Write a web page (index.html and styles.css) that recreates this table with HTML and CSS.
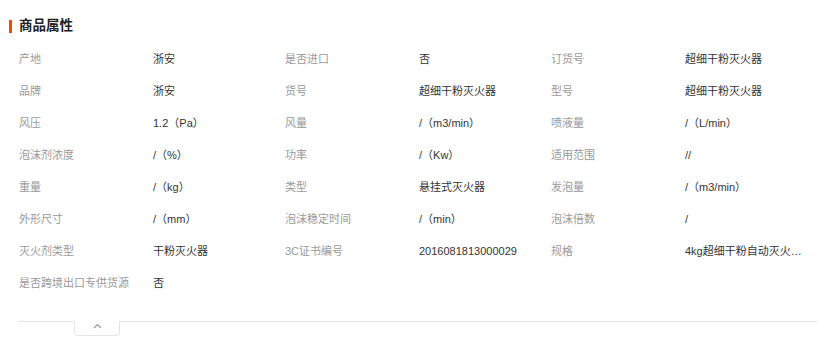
FILE: index.html
```html
<!DOCTYPE html>
<html lang="zh-CN">
<head>
<meta charset="utf-8">
<title>商品属性</title>
<link rel="stylesheet" href="styles.css">
</head>
<body>
<div class="panel">
  <h2 class="title">商品属性</h2>
  <div class="grid">
    <div class="k">产地</div><div class="v">浙安</div>
    <div class="k">是否进口</div><div class="v">否</div>
    <div class="k">订货号</div><div class="v">超细干粉灭火器</div>

    <div class="k">品牌</div><div class="v">浙安</div>
    <div class="k">货号</div><div class="v">超细干粉灭火器</div>
    <div class="k">型号</div><div class="v">超细干粉灭火器</div>

    <div class="k">风压</div><div class="v">1.2（Pa）</div>
    <div class="k">风量</div><div class="v">/（m3/min）</div>
    <div class="k">喷液量</div><div class="v">/（L/min）</div>

    <div class="k">泡沫剂浓度</div><div class="v">/（%）</div>
    <div class="k">功率</div><div class="v">/（Kw）</div>
    <div class="k">适用范围</div><div class="v">//</div>

    <div class="k">重量</div><div class="v">/（kg）</div>
    <div class="k">类型</div><div class="v">悬挂式灭火器</div>
    <div class="k">发泡量</div><div class="v">/（m3/min）</div>

    <div class="k">外形尺寸</div><div class="v">/（mm）</div>
    <div class="k">泡沫稳定时间</div><div class="v">/（min）</div>
    <div class="k">泡沫倍数</div><div class="v">/</div>

    <div class="k">灭火剂类型</div><div class="v">干粉灭火器</div>
    <div class="k">3C证书编号</div><div class="v">2016081813000029</div>
    <div class="k">规格</div><div class="v" title="4kg超细干粉自动灭火装置悬挂式">4kg超细干粉自动灭火装置悬挂式</div>

    <div class="k">是否跨境出口专供货源</div><div class="v">否</div>
  </div>
  <div class="divider">
    <button class="toggle" type="button" aria-label="收起">
      <svg width="9" height="6" viewBox="0 0 9 6"><path d="M1 5 L4.5 1.5 L8 5" fill="none" stroke="#999" stroke-width="1.2"/></svg>
    </button>
  </div>
</div>
</body>
</html>
```

FILE: styles.css
```css
* { box-sizing: border-box; }
html, body { margin: 0; padding: 0; background: #fff; }
body {
  font-family: "Liberation Sans", "Noto Sans CJK SC", sans-serif;
  font-size: 11px;
  color: #333;
}
.panel {
  width: 837px;
  padding: 16px 20px 0 9px;
}
.title {
  margin: 0;
  font-size: 13.5px;
  font-weight: bold;
  color: #222;
  line-height: 20px;
  display: flex;
  align-items: center;
  gap: 7px;
}
.title::before {
  content: "";
  width: 3px;
  height: 13px;
  background: #ff4400;
}
.grid {
  padding-left: 10px;
  padding-top: 7px;
  display: grid;
  grid-template-columns: 134px 132px 134px 132px 134px 132px;
  grid-auto-rows: 32px;
}
.k, .v {
  line-height: 32px;
  white-space: nowrap;
  overflow: hidden;
}
.k { color: #999; }
.v {
  color: #333;
  padding-right: 12px;
  text-overflow: ellipsis;
}
.divider {
  margin-top: 22px;
  margin-left: 9px;
  border-top: 1px solid #e5e5e5;
  height: 20px;
  padding-left: 56px;
}
.toggle {
  display: flex;
  align-items: center;
  justify-content: center;
  width: 46px;
  height: 15px;
  margin-top: -1px;
  padding: 0 0 5px;
  background: #fff;
  border: 1px solid #e5e5e5;
  border-top: 1px solid #fff;
  border-radius: 0 0 4px 4px;
  cursor: pointer;
}
```
